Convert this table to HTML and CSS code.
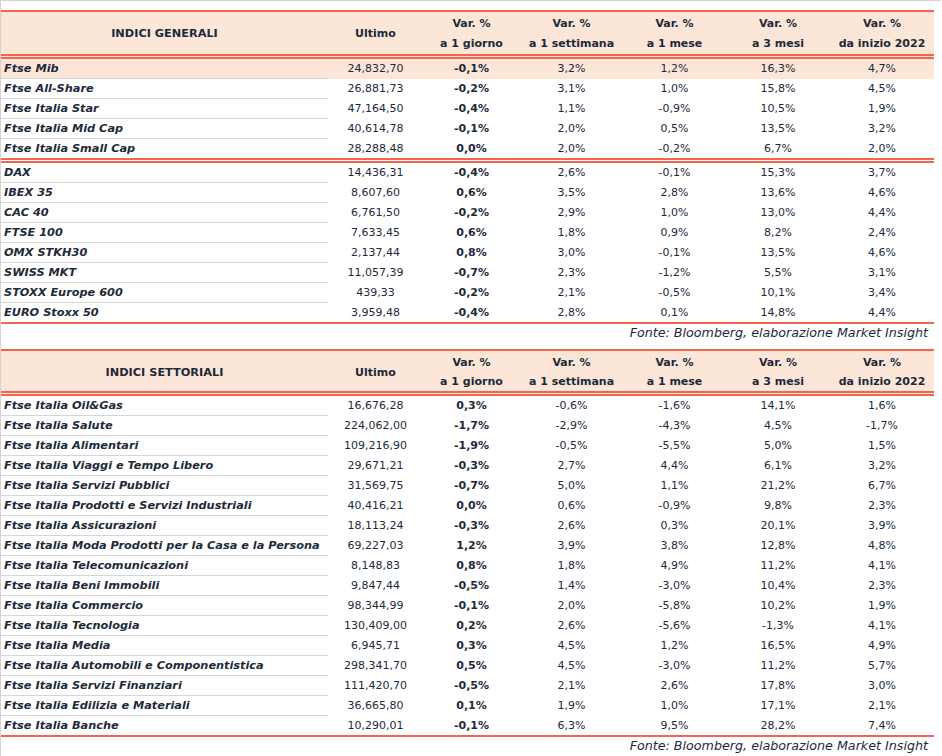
FILE: index.html
```html
<!DOCTYPE html>
<html lang="it">
<head>
<meta charset="utf-8">
<title>Indici</title>
<link rel="stylesheet" href="styles.css">
</head>
<body>
<div class="sheet">
  <table class="grid">
    <colgroup>
      <col class="c-name"><col class="c-ult"><col class="c-day"><col class="c-wk"><col class="c-mo"><col class="c-3m"><col class="c-ytd">
    </colgroup>
    <thead>
      <tr class="head">
        <th class="title">INDICI GENERALI</th>
        <th>Ultimo</th>
        <th>Var. %<br>a 1 giorno</th>
        <th>Var. %<br>a 1 settimana</th>
        <th>Var. %<br>a 1 mese</th>
        <th>Var. %<br>a 3 mesi</th>
        <th>Var. %<br>da inizio 2022</th>
      </tr>
    </thead>
    <tbody>
      <tr class="hl"><td>Ftse Mib</td><td>24,832,70</td><td>-0,1%</td><td>3,2%</td><td>1,2%</td><td>16,3%</td><td>4,7%</td></tr>
      <tr><td>Ftse All-Share</td><td>26,881,73</td><td>-0,2%</td><td>3,1%</td><td>1,0%</td><td>15,8%</td><td>4,5%</td></tr>
      <tr><td>Ftse Italia Star</td><td>47,164,50</td><td>-0,4%</td><td>1,1%</td><td>-0,9%</td><td>10,5%</td><td>1,9%</td></tr>
      <tr><td>Ftse Italia Mid Cap</td><td>40,614,78</td><td>-0,1%</td><td>2,0%</td><td>0,5%</td><td>13,5%</td><td>3,2%</td></tr>
      <tr class="sep"><td>Ftse Italia Small Cap</td><td>28,288,48</td><td>0,0%</td><td>2,0%</td><td>-0,2%</td><td>6,7%</td><td>2,0%</td></tr>
      <tr><td>DAX</td><td>14,436,31</td><td>-0,4%</td><td>2,6%</td><td>-0,1%</td><td>15,3%</td><td>3,7%</td></tr>
      <tr><td>IBEX 35</td><td>8,607,60</td><td>0,6%</td><td>3,5%</td><td>2,8%</td><td>13,6%</td><td>4,6%</td></tr>
      <tr><td>CAC 40</td><td>6,761,50</td><td>-0,2%</td><td>2,9%</td><td>1,0%</td><td>13,0%</td><td>4,4%</td></tr>
      <tr><td>FTSE 100</td><td>7,633,45</td><td>0,6%</td><td>1,8%</td><td>0,9%</td><td>8,2%</td><td>2,4%</td></tr>
      <tr><td>OMX STKH30</td><td>2,137,44</td><td>0,8%</td><td>3,0%</td><td>-0,1%</td><td>13,5%</td><td>4,6%</td></tr>
      <tr><td>SWISS MKT</td><td>11,057,39</td><td>-0,7%</td><td>2,3%</td><td>-1,2%</td><td>5,5%</td><td>3,1%</td></tr>
      <tr><td>STOXX Europe 600</td><td>439,33</td><td>-0,2%</td><td>2,1%</td><td>-0,5%</td><td>10,1%</td><td>3,4%</td></tr>
      <tr class="last"><td>EURO Stoxx 50</td><td>3,959,48</td><td>-0,4%</td><td>2,8%</td><td>0,1%</td><td>14,8%</td><td>4,4%</td></tr>
    </tbody>
  </table>
  <p class="source">Fonte: Bloomberg, elaborazione Market Insight</p>

  <table class="grid second">
    <colgroup>
      <col class="c-name"><col class="c-ult"><col class="c-day"><col class="c-wk"><col class="c-mo"><col class="c-3m"><col class="c-ytd">
    </colgroup>
    <thead>
      <tr class="head">
        <th class="title">INDICI SETTORIALI</th>
        <th>Ultimo</th>
        <th>Var. %<br>a 1 giorno</th>
        <th>Var. %<br>a 1 settimana</th>
        <th>Var. %<br>a 1 mese</th>
        <th>Var. %<br>a 3 mesi</th>
        <th>Var. %<br>da inizio 2022</th>
      </tr>
    </thead>
    <tbody>
      <tr><td>Ftse Italia Oil&amp;Gas</td><td>16,676,28</td><td>0,3%</td><td>-0,6%</td><td>-1,6%</td><td>14,1%</td><td>1,6%</td></tr>
      <tr><td>Ftse Italia Salute</td><td>224,062,00</td><td>-1,7%</td><td>-2,9%</td><td>-4,3%</td><td>4,5%</td><td>-1,7%</td></tr>
      <tr><td>Ftse Italia Alimentari</td><td>109,216,90</td><td>-1,9%</td><td>-0,5%</td><td>-5,5%</td><td>5,0%</td><td>1,5%</td></tr>
      <tr><td>Ftse Italia Viaggi e Tempo Libero</td><td>29,671,21</td><td>-0,3%</td><td>2,7%</td><td>4,4%</td><td>6,1%</td><td>3,2%</td></tr>
      <tr><td>Ftse Italia Servizi Pubblici</td><td>31,569,75</td><td>-0,7%</td><td>5,0%</td><td>1,1%</td><td>21,2%</td><td>6,7%</td></tr>
      <tr><td>Ftse Italia Prodotti e Servizi Industriali</td><td>40,416,21</td><td>0,0%</td><td>0,6%</td><td>-0,9%</td><td>9,8%</td><td>2,3%</td></tr>
      <tr><td>Ftse Italia Assicurazioni</td><td>18,113,24</td><td>-0,3%</td><td>2,6%</td><td>0,3%</td><td>20,1%</td><td>3,9%</td></tr>
      <tr><td>Ftse Italia Moda Prodotti per la Casa e la Persona</td><td>69,227,03</td><td>1,2%</td><td>3,9%</td><td>3,8%</td><td>12,8%</td><td>4,8%</td></tr>
      <tr><td>Ftse Italia Telecomunicazioni</td><td>8,148,83</td><td>0,8%</td><td>1,8%</td><td>4,9%</td><td>11,2%</td><td>4,1%</td></tr>
      <tr><td>Ftse Italia Beni Immobili</td><td>9,847,44</td><td>-0,5%</td><td>1,4%</td><td>-3,0%</td><td>10,4%</td><td>2,3%</td></tr>
      <tr><td>Ftse Italia Commercio</td><td>98,344,99</td><td>-0,1%</td><td>2,0%</td><td>-5,8%</td><td>10,2%</td><td>1,9%</td></tr>
      <tr><td>Ftse Italia Tecnologia</td><td>130,409,00</td><td>0,2%</td><td>2,6%</td><td>-5,6%</td><td>-1,3%</td><td>4,1%</td></tr>
      <tr><td>Ftse Italia Media</td><td>6,945,71</td><td>0,3%</td><td>4,5%</td><td>1,2%</td><td>16,5%</td><td>4,9%</td></tr>
      <tr><td>Ftse Italia Automobili e Componentistica</td><td>298,341,70</td><td>0,5%</td><td>4,5%</td><td>-3,0%</td><td>11,2%</td><td>5,7%</td></tr>
      <tr><td>Ftse Italia Servizi Finanziari</td><td>111,420,70</td><td>-0,5%</td><td>2,1%</td><td>2,6%</td><td>17,8%</td><td>3,0%</td></tr>
      <tr><td>Ftse Italia Edilizia e Materiali</td><td>36,665,80</td><td>0,1%</td><td>1,9%</td><td>1,0%</td><td>17,1%</td><td>2,1%</td></tr>
      <tr class="last"><td>Ftse Italia Banche</td><td>10,290,01</td><td>-0,1%</td><td>6,3%</td><td>9,5%</td><td>28,2%</td><td>7,4%</td></tr>
    </tbody>
  </table>
  <p class="source">Fonte: Bloomberg, elaborazione Market Insight</p>
</div>
</body>
</html>
```

FILE: styles.css
```css
html, body {
  margin: 0;
  padding: 0;
  background: #ffffff;
}

.sheet {
  width: 941px;
  height: 756px;
  border-top: 1px solid #d4d4d4;
  border-left: 1px solid #d4d4d4;
  padding-top: 9px;
  box-sizing: border-box;
  font-family: "DejaVu Sans", sans-serif;
  color: #1c2a3a;
  overflow: hidden;
}

.grid {
  border-collapse: separate;
  border-spacing: 0;
  table-layout: fixed;
  width: 933px;
  font-size: 11px;
}

.c-name { width: 327px; }
.c-ult { width: 95px; }
.c-day { width: 97px; }
.c-wk { width: 103px; }
.c-mo { width: 103px; }
.c-3m { width: 104px; }
.c-ytd { width: 104px; }

.head th {
  background: #fbe6d7;
  border-top: 2px solid #f0674e;
  border-bottom: 5px double #f0674e;
  height: 39px;
  padding: 2px 0 0;
  font-weight: bold;
  font-size: 11px;
  line-height: 20px;
  text-align: center;
  vertical-align: middle;
  white-space: nowrap;
}

.head th.title {
  font-size: 11.3px;
}

.second .head th {
  height: 37px;
  line-height: 19px;
}

.grid td {
  padding: 1px 0 0;
  line-height: 18px;
  border-bottom: 1px solid transparent;
  text-align: center;
  white-space: nowrap;
}

.grid td:first-child {
  text-align: left;
  padding-left: 3px;
  font-weight: bold;
  font-style: italic;
  font-size: 11.3px;
  border-bottom-color: #d6d6d6;
}

.grid td:nth-child(3) {
  font-weight: bold;
}

.grid tr.hl td {
  background: #fbe6d7;
}

.grid tr.sep td,
.grid tr.sep td:first-child {
  border-bottom: 5px double #f0674e;
}

.grid tr.last td,
.grid tr.last td:first-child {
  border-bottom: 2px solid #f0674e;
}

.source {
  margin: 0 0 7px;
  width: 927px;
  text-align: right;
  font-style: italic;
  font-size: 12.7px;
  line-height: 18px;
}
```
